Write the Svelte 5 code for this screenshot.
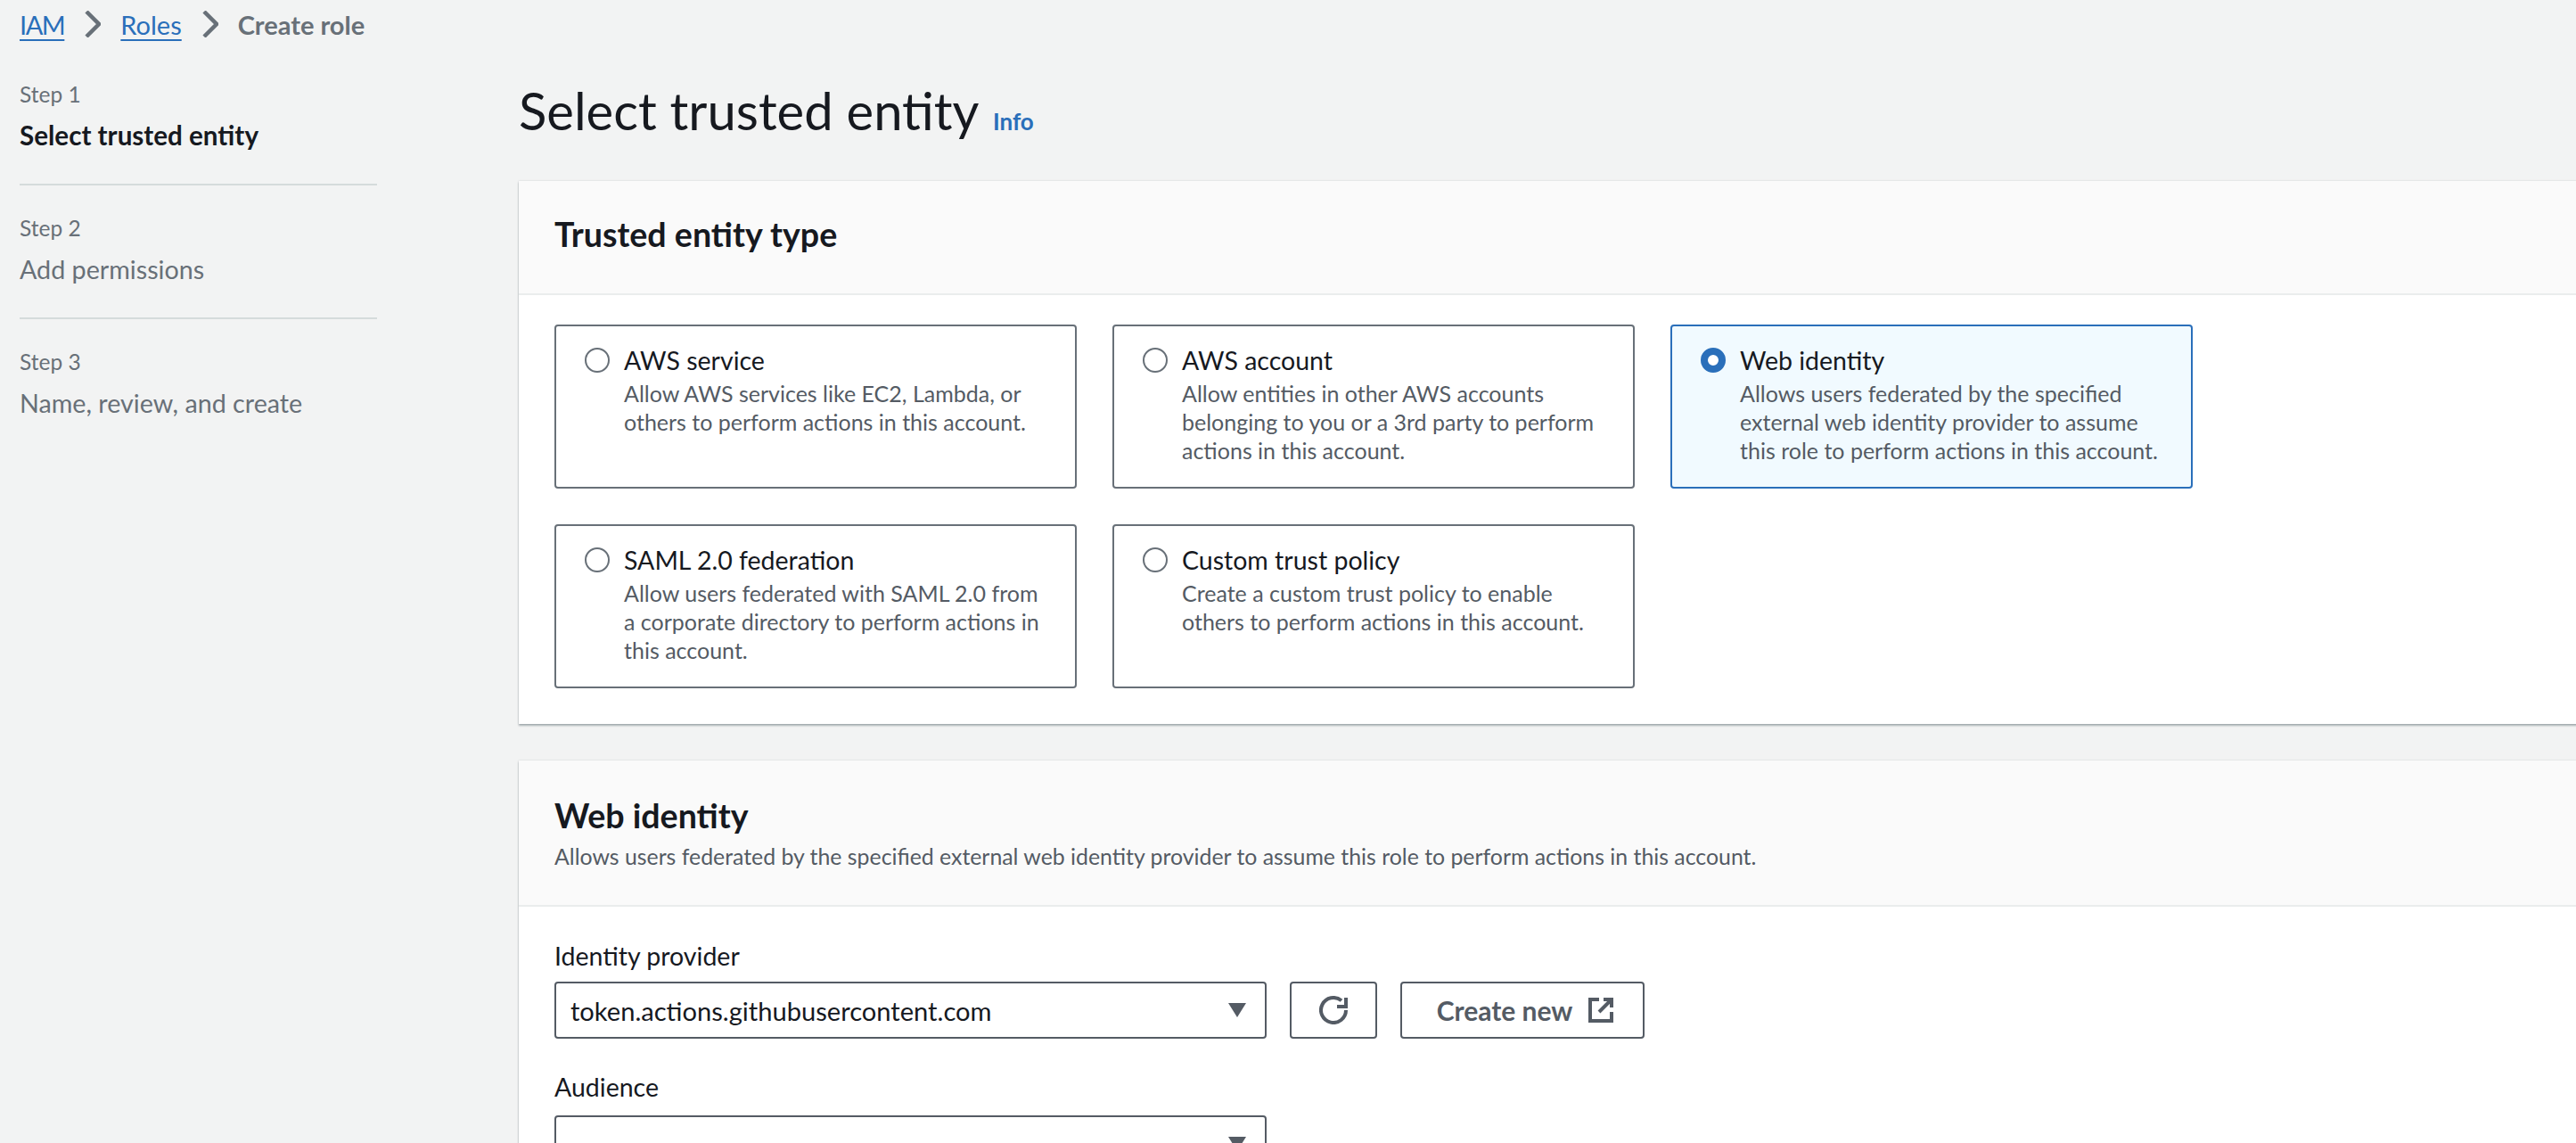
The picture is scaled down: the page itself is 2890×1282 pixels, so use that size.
<script>
  const steps = [
    { label: 'Step 1', name: 'Select trusted entity', active: true },
    { label: 'Step 2', name: 'Add permissions' },
    { label: 'Step 3', name: 'Name, review, and create' }
  ]

  const entityTypes = [
    { title: 'AWS service', desc: 'Allow AWS services like EC2, Lambda, or others to perform actions in this account.' },
    { title: 'AWS account', desc: 'Allow entities in other AWS accounts belonging to you or a 3rd party to perform actions in this account.' },
    { title: 'Web identity', desc: 'Allows users federated by the specified external web identity provider to assume this role to perform actions in this account.', selected: true },
    { title: 'SAML 2.0 federation', desc: 'Allow users federated with SAML 2.0 from a corporate directory to perform actions in this account.' },
    { title: 'Custom trust policy', desc: 'Create a custom trust policy to enable others to perform actions in this account.' }
  ]
</script>

<div class="page">
  <nav class="crumbs">
    <a class="iam" href="#iam">IAM</a>
    <svg class="chevron" viewBox="0 0 18 30"><path d="M2 1l14 14L2 29" /></svg>
    <a href="#roles">Roles</a>
    <svg class="chevron" viewBox="0 0 18 30"><path d="M2 1l14 14L2 29" /></svg>
    <span>Create role</span>
  </nav>

  <div class="layout">
    <aside class="steps">
      {#each steps as step}
        <div class="step">
          <div class="step-label">{step.label}</div>
          <div class="step-name" class:active={step.active}>{step.name}</div>
        </div>
      {/each}
    </aside>

    <main class="content">
      <h1>Select trusted entity <a class="info" href="#info">Info</a></h1>

      <section class="panel">
        <header class="panel-head short">
          <h2>Trusted entity type</h2>
        </header>
        <div class="panel-body cards">
          {#each entityTypes as item}
            <div class="card" class:selected={item.selected}>
              <span class="radio"></span>
              <div class="card-text">
                <div class="card-title">{item.title}</div>
                <div class="card-desc">{item.desc}</div>
              </div>
            </div>
          {/each}
        </div>
      </section>

      <section class="panel">
        <header class="panel-head">
          <h2>Web identity</h2>
          <p>Allows users federated by the specified external web identity provider to assume this role to perform actions in this account.</p>
        </header>
        <div class="panel-body form">
          <label for="provider">Identity provider</label>
          <div class="row">
            <div class="select" id="provider">
              <span>token.actions.githubusercontent.com</span>
              <i class="caret"></i>
            </div>
            <button class="btn icon-btn" aria-label="Refresh">
              <svg viewBox="0 0 32 32" width="32" height="32"><path d="M30 16a14 14 0 1 1-5-10.7" /><path d="M30 2v10H20" /></svg>
            </button>
            <button class="btn create">
              Create new
              <svg viewBox="0 0 28 28" width="28" height="28"><path d="M12 2H2v24h24V16" /><path d="M17 2h9v9M26 2L12 16" /></svg>
            </button>
          </div>
          <label class="second" for="audience">Audience</label>
          <div class="select" id="audience"><i class="caret"></i></div>
        </div>
      </section>
    </main>
  </div>
</div>

<style>
  :global(body) {
    background: #f2f3f3;
    overflow: hidden;
  }

  .page {
    width: 2890px;
    height: 1282px;
    overflow: hidden;
    font-family: Lato, "Noto Sans", sans-serif;
    font-size: 28.5px;
    color: #16191f;
    background: #f2f3f3;
  }

  .crumbs {
    display: flex;
    align-items: center;
    height: 54px;
    padding-left: 22px;
    color: #687078;
    font-size: 29px;
    font-weight: 700;
  }

  .crumbs a {
    color: #2a6fba;
    font-weight: 400;
    text-decoration: underline;
    text-underline-offset: 5px;
    text-decoration-thickness: 2px;
  }

  .crumbs .iam {
    letter-spacing: -0.05em;
  }

  .chevron {
    width: 18px;
    height: 30px;
    margin: 0 22px 0 23px;
    fill: none;
    stroke: #687078;
    stroke-width: 4.5;
  }

  .layout {
    display: grid;
    grid-template-columns: 582px 1fr;
    padding-top: 2px;
  }

  .steps {
    padding: 32px 0 0 22px;
    width: 401px;
  }

  .step {
    height: 118px;
    margin-bottom: 30px;
    border-bottom: 2px solid #d5dbdb;
  }

  .step:last-child {
    border-bottom: none;
  }

  .step-label {
    font-size: 24.5px;
    line-height: 36px;
    color: #687078;
  }

  .step-name {
    margin-top: 8px;
    font-size: 28.7px;
    line-height: 40px;
    color: #687078;
  }

  .step-name.active {
    color: #16191f;
    font-size: 29.6px;
    font-weight: 700;
  }

  .content {
    width: 2400px;
  }

  h1 {
    margin: 0;
    height: 147px;
    padding-top: 32px;
    box-sizing: border-box;
    font-size: 58px;
    line-height: 72px;
    font-weight: 400;
  }

  .info {
    margin-left: 2px;
    font-size: 26px;
    font-weight: 700;
    color: #2a6fba;
    text-decoration: none;
  }

  .panel {
    background: #fff;
    margin-bottom: 41px;
    box-shadow: 0 2px 2px rgba(0, 28, 36, 0.3), 0 0 2px rgba(0, 28, 36, 0.15);
  }

  .panel-head {
    height: 164px;
    box-sizing: border-box;
    padding: 40px 40px 0;
    background: #fafafa;
    border-bottom: 2px solid #eaeded;
  }

  .panel-head.short {
    height: 128px;
    padding-top: 38px;
  }

  h2 {
    margin: 0;
    font-size: 37.6px;
    line-height: 44px;
    font-weight: 700;
  }

  .panel-head p {
    margin: 7px 0 0;
    font-size: 24.85px;
    line-height: 32px;
    color: #545b64;
  }

  .panel-body {
    padding: 33px 40px 40px;
  }

  .cards {
    display: grid;
    grid-template-columns: repeat(3, 586px);
    grid-auto-rows: 184px;
    gap: 40px;
  }

  .card {
    box-sizing: border-box;
    display: flex;
    gap: 16px;
    padding: 20px 32px;
    border: 2px solid #687078;
    border-radius: 4px;
    background: #fff;
  }

  .card.selected {
    border-color: #2a6fba;
    background: #f1faff;
  }

  .radio {
    flex: none;
    box-sizing: border-box;
    width: 28px;
    height: 28px;
    margin-top: 4px;
    border: 2px solid #687078;
    border-radius: 50%;
    background: #fff;
  }

  .selected .radio {
    border: 8px solid #2a6fba;
  }

  .card-title {
    line-height: 36px;
  }

  .card-desc {
    margin-top: 3px;
    font-size: 25px;
    line-height: 32px;
    color: #545b64;
  }

  .form {
    padding-top: 35px;
  }

  .form label {
    display: block;
    line-height: 40px;
    margin-bottom: 9px;
  }

  .form label.second {
    margin-top: 34px;
    margin-bottom: 12px;
  }

  .row {
    display: flex;
    gap: 26px;
  }

  .select {
    box-sizing: border-box;
    width: 799px;
    height: 64px;
    padding: 0 21px 0 16px;
    display: flex;
    align-items: center;
    border: 2px solid #545b64;
    border-radius: 4px;
    background: #fff;
    font-size: 29.1px;
  }

  .caret {
    margin-left: auto;
    border-left: 10px solid transparent;
    border-right: 10px solid transparent;
    border-top: 16px solid #545b64;
  }

  .btn {
    box-sizing: border-box;
    width: 274px;
    height: 64px;
    padding: 0;
    display: flex;
    align-items: center;
    justify-content: center;
    gap: 18px;
    font: inherit;
    font-size: 30px;
    font-weight: 700;
    color: #545b64;
    background: #fff;
    border: 2px solid #545b64;
    border-radius: 4px;
  }

  .btn.create {
    padding-left: 6px;
  }

  .icon-btn {
    width: 98px;
  }

  .btn svg {
    fill: none;
    stroke: #545b64;
    stroke-width: 4;
  }
</style>
